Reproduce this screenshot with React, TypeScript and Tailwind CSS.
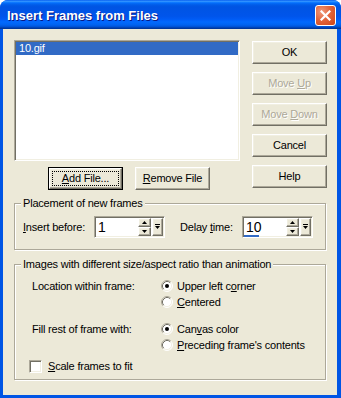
import React from "react";

const raised =
  "border border-t-white border-l-white border-r-[#716F64] border-b-[#716F64] shadow-[inset_-1px_-1px_0_#ACA899,inset_1px_1px_0_#F1EFE2]";
const sunken =
  "border border-t-[#ACA899] border-l-[#ACA899] border-r-white border-b-white shadow-[inset_1px_1px_0_#716F64,inset_-1px_-1px_0_#F1EFE2]";

function Btn({ children, disabled, isDefault }: BtnProps) {
  const label = disabled ? "text-[#ACA899] [text-shadow:1px_1px_0_#fff]" : "text-black";
  if (isDefault) {
    return (
      <div className="w-[75px] h-[23px] border border-black">
        <div className={`h-full bg-[#ECE9D8] p-[2px] ${raised}`}>
          <div className="h-full border border-dotted border-black flex items-center justify-center leading-[13px]">
            {children}
          </div>
        </div>
      </div>
    );
  }
  return (
    <div className={`w-[75px] h-[23px] bg-[#ECE9D8] flex items-center justify-center leading-[13px] ${raised} ${label}`}>
      {children}
    </div>
  );
}

function Arrow({ up }: { up?: boolean }) {
  return (
    <svg width="5" height="3" viewBox="0 0 5 3">
      <path d={up ? "M2.5 0L5 3H0z" : "M0 0H5L2.5 3z"} fill="black" />
    </svg>
  );
}

function Spin({ value, caret }: { value: string; caret?: boolean }) {
  return (
    <div className={`relative w-[71px] h-[22px] bg-white p-[1px] flex ${sunken}`}>
      <div className="w-[42px] pl-[2px] flex items-center text-[14px] leading-[16px] tracking-normal">{value}</div>
      <div className="w-[13px] flex flex-col">
        <div className={`h-[9px] bg-[#ECE9D8] flex items-center justify-center ${raised}`}>
          <Arrow up />
        </div>
        <div className={`h-[9px] bg-[#ECE9D8] flex items-center justify-center ${raised}`}>
          <Arrow />
        </div>
      </div>
      <div className={`ml-[1px] w-[11px] bg-[#ECE9D8] flex items-center justify-center ${raised}`}>
        <svg width="5" height="6" viewBox="0 0 5 6">
          <rect x="0" y="0" width="5" height="1" fill="black" />
          <path d="M0 2H5L2.5 5z" fill="black" />
        </svg>
      </div>
      {caret && <div className="absolute left-[1px] bottom-0 w-[15px] h-[2px] bg-[#316AC5]" />}
    </div>
  );
}

function Radio({ checked }: { checked?: boolean }) {
  return (
    <svg width="12" height="12" viewBox="0 0 12 12">
      <circle cx="6" cy="6" r="5" fill="white" />
      <path d="M2.11 9.89A5.5 5.5 0 0 1 9.89 2.11" fill="none" stroke="#ACA899" />
      <path d="M2.82 9.18A4.5 4.5 0 0 1 9.18 2.82" fill="none" stroke="#716F64" />
      <path d="M9.89 2.11A5.5 5.5 0 0 1 2.11 9.89" fill="none" stroke="#FFFFFF" />
      <path d="M9.18 2.82A4.5 4.5 0 0 1 2.82 9.18" fill="none" stroke="#F1EFE2" />
      {checked && <circle cx="6" cy="6" r="2" fill="black" />}
    </svg>
  );
}

function RadioRow({ checked, children }: { checked?: boolean; children: React.ReactNode }) {
  return (
    <div className="h-[16px] flex items-center">
      <Radio checked={checked} />
      <span className="ml-[4px]">{children}</span>
    </div>
  );
}

export default function App() {
  return (
    <div className="w-[341px] h-[398px] flex flex-col rounded-t-[8px] overflow-hidden bg-[#0055E5] font-['Liberation_Sans',Arial,sans-serif]">
      <div className="h-[29px] flex pl-[7px] pr-[5px] bg-[linear-gradient(to_bottom,#0058EE_0%,#3593FF_4%,#288EFF_6%,#127DFF_8%,#036FFC_10%,#0262EE_14%,#0057E5_20%,#0054E3_24%,#0055EB_56%,#005BF5_66%,#026AFE_76%,#0062EF_86%,#0052D6_92%,#0040AB_96%,#003092_100%)]">
        <span className="mt-[8px] text-white font-bold text-[13px] leading-[16px] [text-shadow:1px_1px_0_#0A1883]">
          Insert Frames from Files
        </span>
        <div className="ml-auto mt-[5px] w-[21px] h-[21px] rounded-[3px] border border-white bg-[radial-gradient(circle_at_30%_30%,#F09A7C_0%,#E2653C_45%,#CF4417_100%)] flex items-center justify-center">
          <svg width="11" height="11" viewBox="0 0 11 11">
            <path d="M1.5 1.5L9.5 9.5M9.5 1.5L1.5 9.5" stroke="white" strokeWidth="2.2" strokeLinecap="square" />
          </svg>
        </div>
      </div>

      <div className="flex-1 ml-[3px] mr-[4px] mb-[3px] bg-[#ECE9D8] pt-[11px] pl-[11px] text-[11px] leading-[13px] tracking-[-0.2px] text-black">
        <div className="flex gap-[12px]">
          <div className="w-[226px]">
            <div className={`h-[121px] bg-white p-[1px] ${sunken}`}>
              <div className="h-[13px] bg-[#316AC5] text-white pl-[3px] leading-[13px]">10.gif</div>
            </div>
            <div className="mt-[6px] pl-[34px] flex gap-[12px]">
              <Btn isDefault>
                <span><u>A</u>dd File...</span>
              </Btn>
              <div className="w-[74px]">
                <Btn>
                  <span><u>R</u>emove File</span>
                </Btn>
              </div>
            </div>
          </div>
          <div className="pt-[1px] flex flex-col gap-[8px]">
            <Btn>OK</Btn>
            <Btn disabled>
              <span>Move <u>U</u>p</span>
            </Btn>
            <Btn disabled>
              <span>Move <u>D</u>own</span>
            </Btn>
            <Btn>Cancel</Btn>
            <Btn>Help</Btn>
          </div>
        </div>

        <fieldset className="mt-[7px] w-[312px] border border-[#ACA899] shadow-[inset_1px_1px_0_#fff,1px_1px_0_#fff] px-[8px] pt-[6px] pb-[11px]">
          <legend className="-ml-[2px] px-[2px] bg-[#ECE9D8] leading-[13px]">Placement of new frames</legend>
          <div className="flex items-center h-[22px]">
            <span className="w-[71px]">
              <u>I</u>nsert before:
            </span>
            <Spin value="1" />
            <span className="ml-[15px] w-[62px]">
              Delay <u>t</u>ime:
            </span>
            <Spin value="10" caret />
          </div>
        </fieldset>

        <fieldset className="mt-[8px] w-[312px] border border-[#ACA899] shadow-[inset_1px_1px_0_#fff,1px_1px_0_#fff] px-[8px] pt-[7px] pb-[5px]">
          <legend className="-ml-[2px] px-[2px] bg-[#ECE9D8] leading-[13px]">
            Images with different size/aspect ratio than animation
          </legend>
          <div className="pl-[6px]">
            <div className="flex">
              <div className="w-[132px] pl-[3px] h-[16px] flex items-center">Location within frame:</div>
              <div className="flex flex-col">
                <RadioRow checked>
                  Upper left c<u>o</u>rner
                </RadioRow>
                <RadioRow>
                  <u>C</u>entered
                </RadioRow>
              </div>
            </div>
            <div className="flex mt-[11px]">
              <div className="w-[132px] pl-[3px] h-[16px] flex items-center">Fill rest of frame with:</div>
              <div className="flex flex-col">
                <RadioRow checked>
                  Can<u>v</u>as color
                </RadioRow>
                <RadioRow>
                  <u>P</u>receding frame's contents
                </RadioRow>
              </div>
            </div>
            <div className="mt-[5px] h-[16px] flex items-center">
              <div className={`w-[13px] h-[13px] bg-white ${sunken}`} />
              <span className="ml-[6px]">
                <u>S</u>cale frames to fit
              </span>
            </div>
          </div>
        </fieldset>
      </div>
    </div>
  );
}

interface BtnProps {
  children: React.ReactNode;
  disabled?: boolean;
  isDefault?: boolean;
}
